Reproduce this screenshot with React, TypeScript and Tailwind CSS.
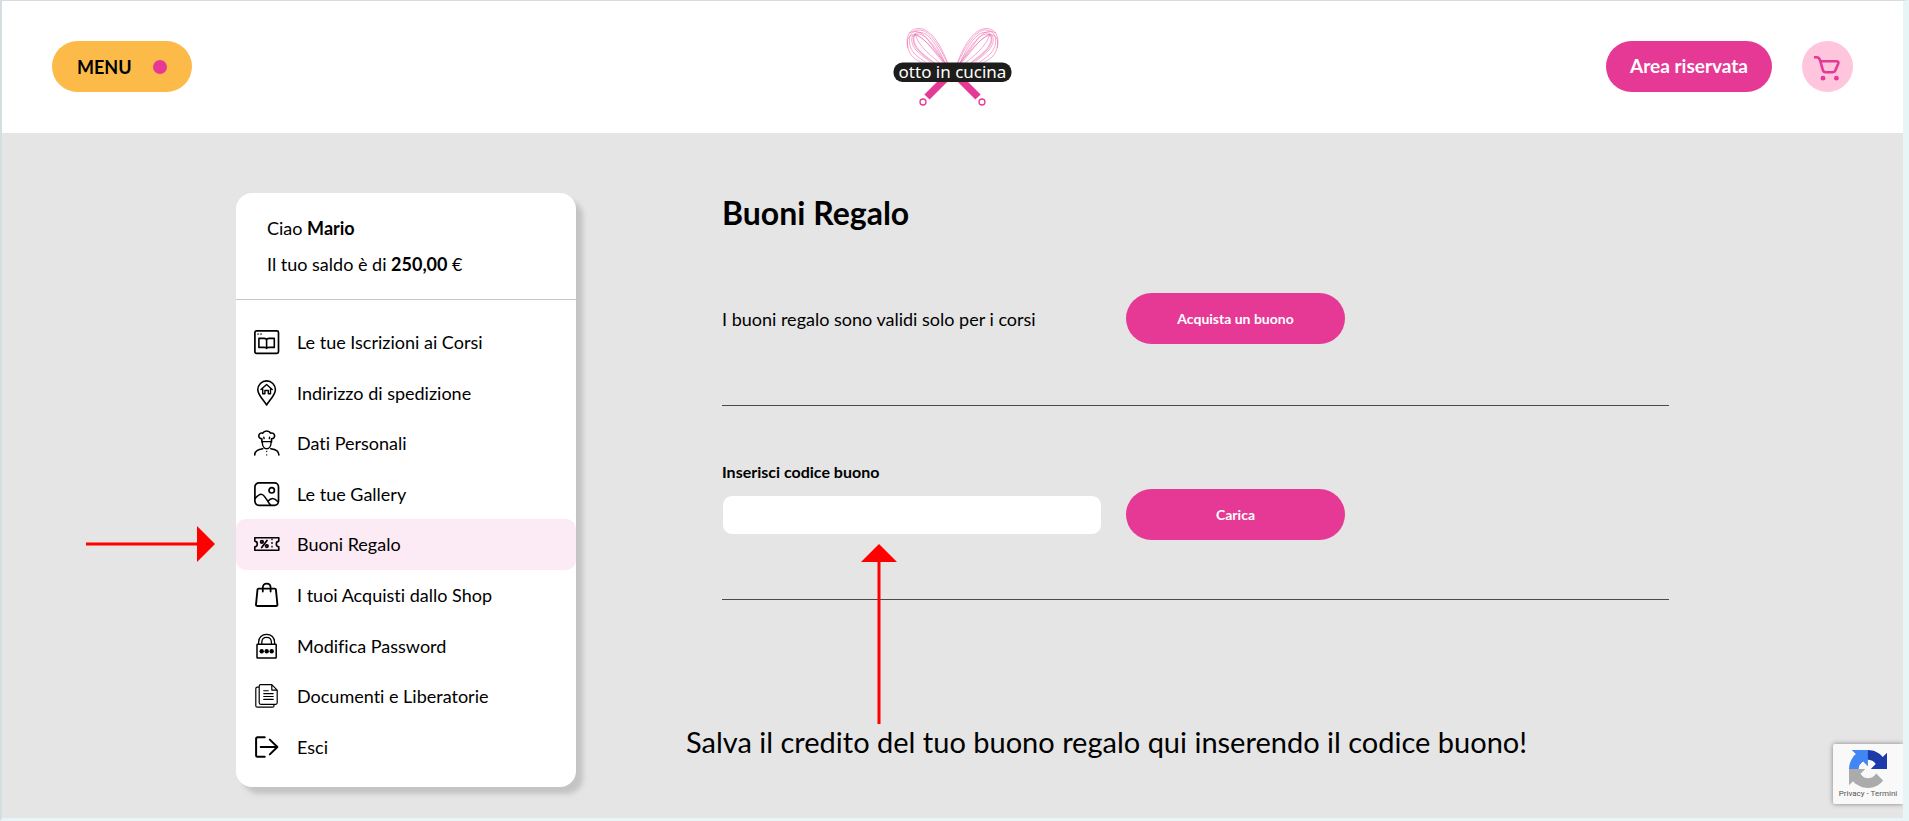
import { useState } from 'react';
import type { FormEvent, ReactNode } from 'react';

type MenuItem = {
  label: string;
  href: string;
  icon: ReactNode;
  active?: boolean;
};

function Icon({ children }: { children: ReactNode }) {
  return (
    <svg
      viewBox="0 0 26 26"
      className="h-[26px] w-[26px] shrink-0"
      fill="none"
      stroke="currentColor"
      strokeWidth="1.7"
      strokeLinecap="round"
      strokeLinejoin="round"
      aria-hidden="true"
    >
      {children}
    </svg>
  );
}

const menuItems: MenuItem[] = [
  {
    label: 'Le tue Iscrizioni ai Corsi',
    href: '#corsi',
    icon: (
      <Icon>
        <rect x="0.9" y="1.9" width="23.6" height="22.4" rx="1.6" />
        <path d="M3.6 5h1M6.6 5h1" strokeWidth="1.2" />
        <path d="M4.9 9.4h5.2c1.4 0 2.5.8 2.5 1.900 0-1.100 1.100-1.900 2.500-1.900h5.200v9h-5.200c-1.400 0-2.500.3-2.500 1.100 0-.8-1.100-1.100-2.500-1.100H4.900zM12.600 11.300v8" strokeWidth="1.6" />
      </Icon>
    ),
  },
  {
    label: 'Indirizzo di spedizione',
    href: '#indirizzo',
    icon: (
      <Icon>
        <path d="M12.6 25C9.8 20.4 3.8 14.8 3.8 9.7a8.8 8.8 0 0 1 17.6 0c0 5.1-6 10.7-8.8 15.3z" strokeWidth="1.6" />
        <path d="M7 9.6l5.6-5 5.6 5M8.7 8.800v5h2.200v-3.300h3.400v3.300h2.200v-5" strokeWidth="1.4" />
      </Icon>
    ),
  },
  {
    label: 'Dati Personali',
    href: '#dati',
    icon: (
      <Icon>
        <path d="M7.9 12V8.9C5.8 8.7 4.6 7.3 4.8 5.5c.2-1.9 2.1-3 4-2.300.7-1.500 2.200-2.200 3.900-2.200s3.200.7 3.900 2.200c1.900-.7 3.800.4 4 2.300.2 1.800-1 3.200-3.100 3.400V12" strokeWidth="1.6" />
        <path d="M7.9 11.6h9.600M8.300 12c0 4 1.800 6.800 4.400 6.800s4.400-2.800 4.400-6.800M9.800 7.200l.3 1.400M15.600 7.200l-.3 1.400" strokeWidth="1.4" />
        <path d="M.7 25c0-3.7 3.4-5.7 8.1-6.3M24.9 25c0-3.7-3.4-5.7-8.1-6.3" strokeWidth="1.6" />
        <path d="M12.7 21.5v.1M12.7 24.8v.1" strokeWidth="1.3" />
      </Icon>
    ),
  },
  {
    label: 'Le tue Gallery',
    href: '#gallery',
    icon: (
      <Icon>
        <rect x="0.9" y="1.9" width="23.6" height="22.4" rx="4" />
        <circle cx="17.7" cy="9.3" r="2.7" />
        <path d="M1 17.500c2-2.300 4.200-4.300 6.200-4.300 3.500 0 5.500 6.500 9.500 11M13.800 20.300c1.600-1.700 3.200-2.800 4.800-2.800 2 0 3.700 1.300 5.400 3.300" strokeWidth="1.6" />
      </Icon>
    ),
  },
  {
    label: 'Buoni Regalo',
    href: '#buoni',
    active: true,
    icon: (
      <Icon>
        <path d="M.8 6.8h24v3.300c-1.600.2-2.500 1.400-2.500 2.900s.9 2.700 2.500 2.900v3.300H.8v-3.300c1.600-.2 2.500-1.400 2.500-2.900s-.9-2.700-2.500-2.900z" strokeWidth="1.6" />
        <path d="M18 7.500v11" strokeDasharray="1.8 1.8" strokeLinecap="butt" strokeWidth="1.3" />
        <path d="M13 9.500l-5.300 7" />
        <circle cx="7.9" cy="10.900" r="1.300" />
        <circle cx="12.8" cy="15.100" r="1.300" />
      </Icon>
    ),
  },
  {
    label: 'I tuoi Acquisti dallo Shop',
    href: '#acquisti',
    icon: (
      <Icon>
        <path d="M4.6 6.6h16.2c.6 0 1 .3 1.100.9l1.500 15c.1.9-.5 1.500-1.300 1.500H3.300c-.8 0-1.400-.6-1.300-1.500l1.500-15c.1-.6.5-.9 1.100-.9z" strokeWidth="1.9" />
        <path d="M8.800 9.500V5.800c0-2.600 1.600-4.200 3.900-4.200s3.900 1.600 3.900 4.200v3.700" strokeWidth="1.8" />
      </Icon>
    ),
  },
  {
    label: 'Modifica Password',
    href: '#password',
    icon: (
      <Icon>
        <rect x="3" y="11.2" width="19.2" height="13.8" rx="0.6" strokeWidth="1.5" />
        <path d="M4.6 11V9.2C4.6 4.6 8 1.4 12.6 1.4s8 3.2 8 7.8V11M7.8 11V9.3c0-3 2-5 4.800-5s4.800 2 4.800 5V11" strokeWidth="1.3" />
        <g fill="currentColor" stroke="none">
          <circle cx="7.7" cy="18.2" r="2.2" />
          <circle cx="12.7" cy="18.2" r="2.2" />
          <circle cx="17.7" cy="18.2" r="2.2" />
        </g>
      </Icon>
    ),
  },
  {
    label: 'Documenti e Liberatorie',
    href: '#documenti',
    icon: (
      <Icon>
        <path d="M17.8 1.7H6.700c-.9 0-1.500.6-1.500 1.500v16.600c0 .9.6 1.500 1.500 1.500h15c.9 0 1.500-.6 1.500-1.500V7.100zM17.800 1.700v5.400h5.400M5 4.200H3.300c-.9 0-1.500.6-1.500 1.500v17c0 .9.6 1.500 1.500 1.500h15.200c.9 0 1.500-.6 1.500-1.500v-1.200" strokeWidth="1.2" />
        <path d="M9.7 7.800h4.600M9.700 10.600h9.500M9.700 13.500h9.500M9.700 16.400h9.500" strokeWidth="1.1" />
      </Icon>
    ),
  },
  {
    label: 'Esci',
    href: '#esci',
    icon: (
      <Icon>
        <path d="M10.7 3.3H3.6c-.9 0-1.500.6-1.500 1.500v16.400c0 .9.6 1.500 1.500 1.500h7.100M6.700 13h16.600M15.800 5.600l7.600 7.400-7.600 7.400" strokeWidth="2" />
      </Icon>
    ),
  },
];

function Whisk() {
  return (
    <g>
      <g fill="none" stroke="#ee6fb0" strokeWidth="0.6">
        <path d="M56 42C50 24 39 3.500 26 3.500 11 3.500 12 23 19 31c5 5 9 6 17 10" />
        <path d="M56 42C49 26 38 5.500 27 5 14 5 14 20 21 28c6 7 12 8 20 16" />
        <path d="M54 42C47 26 37 8 28 7.500 16 7 17 18 23 25c7 7 14 11 22 20" />
        <path d="M54 42C46 27 34 9 25 9c-7 0-6 10 0 16 7 8 15 11 23 20" />
        <path d="M54 42C43 30 33 13 22 9c-3 5 0 12 5 17 6 6 13 10 23 19" />
        <path d="M52 42C39 32 26 22 22 9M16 8c8-4 14 0 19 7l20 27" />
        <path d="M15 23c-2-9 1-14 7-13 9 2 21 17 33 32" />
      </g>
      <path d="M55 51L34 72" stroke="#e63995" strokeWidth="7.400" />
      <circle cx="30" cy="77" r="3" fill="none" stroke="#e63995" strokeWidth="1.300" />
    </g>
  );
}

function Logo() {
  return (
    <a href="#home" aria-label="otto in cucina" className="block">
      <svg viewBox="0 0 119 84" className="h-[84px] w-[119px]">
        <Whisk />
        <g transform="translate(119 0) scale(-1 1)">
          <Whisk />
        </g>
        <rect x="0.5" y="37.500" width="118" height="19.500" rx="9" fill="#1d1d1b" />
        <text x="59.500" y="52.500" textAnchor="middle" fill="#fff" fontSize="17" fontFamily="'Noto Sans', sans-serif">
          otto in cucina
        </text>
      </svg>
    </a>
  );
}

function Header() {
  return (
    <header className="grid h-[132px] grid-cols-[1fr_auto_1fr] items-center bg-white px-[50px] pb-px">
      <button type="button" className="flex h-[51px] items-center gap-[21px] justify-self-start rounded-full bg-[#fcbb49] px-[25px] text-lg font-bold">
        MENU
        <span className="h-3.5 w-3.5 rounded-full bg-[#e63995]" />
      </button>
      <Logo />
      <div className="flex items-center gap-[30px] justify-self-end">
        <a href="#area" className="flex h-[51px] items-center rounded-full bg-[#e63995] px-6 text-[19px] font-bold text-white">
          Area riservata
        </a>
        <a href="#carrello" aria-label="Carrello" className="flex h-[51px] w-[51px] items-center justify-center rounded-full bg-[#ffc5dd]">
          <svg viewBox="0 0 28 28" className="h-7 w-7" fill="none" stroke="#e63995" strokeWidth="2.6" strokeLinecap="round" strokeLinejoin="round">
            <path d="M.6 4.200h2c1.800 0 2.800.9 3.300 2.600l3 10.300c.4 1.400 1.200 2.100 2.600 2.100h7.500c1.100 0 1.900-.5 2.300-1.600l2.900-6.800c.6-1.500-.1-2.500-1.600-2.500H6.400" />
            <circle cx="9" cy="25.200" r="2.400" fill="#e63995" stroke="none" />
            <circle cx="22.400" cy="25.200" r="2.400" fill="#e63995" stroke="none" />
          </svg>
        </a>
      </div>
    </header>
  );
}

function Sidebar() {
  return (
    <aside className="flex min-h-[594px] w-[340px] shrink-0 flex-col rounded-2xl bg-white pb-[15px] text-lg shadow-[7px_7px_5px_#c4c4c4]">
      <div className="border-b border-[#c6c6c6] px-[31px] py-[17px] leading-9">
        <p>Ciao <strong>Mario</strong></p>
        <p>Il tuo saldo è di <strong>250,00</strong> €</p>
      </div>
      <nav className="mt-[17px] grid flex-1 auto-rows-fr">
        {menuItems.map((item) => (
          <a
            key={item.label}
            href={item.href}
            aria-current={item.active ? 'page' : undefined}
            className={`relative flex items-center gap-[17px] rounded-[10px] px-[18px] ${item.active ? 'bg-[#fceaf4]' : ''}`}
          >
            {item.icon}
            {item.label}
            {item.active && (
              <svg viewBox="0 0 129 36" className="absolute right-full mr-[21px] h-9 w-[129px]" fill="red" aria-hidden="true">
                <path d="M0 16.500h111V0l18 18-18 18V19.500H0z" />
              </svg>
            )}
          </a>
        ))}
      </nav>
    </aside>
  );
}

function GiftCards() {
  const [code, setCode] = useState('');

  const handleSubmit = (e: FormEvent) => {
    e.preventDefault();
    setCode('');
  };

  return (
    <section className="min-w-0 flex-1">
      <h1 className="text-[32px] leading-10 font-bold">Buoni Regalo</h1>

      <div className="mt-[60px] grid grid-cols-[380px_219px] items-center gap-6 border-b border-[#4a4a4a] pb-[61px]">
        <p className="text-lg">I buoni regalo sono validi solo per i corsi</p>
        <button type="button" className="h-[51px] rounded-full bg-[#e63995] text-sm font-bold text-white">
          Acquista un buono
        </button>
      </div>

      <form onSubmit={handleSubmit} className="border-b border-[#4a4a4a] pt-[54px] pb-[59px]">
        <label htmlFor="codice" className="block text-base font-bold">Inserisci codice buono</label>
        <div className="mt-[5px] grid grid-cols-[380px_219px] items-center gap-6">
          <div className="relative">
            <input
              id="codice"
              type="text"
              value={code}
              onChange={(e) => setCode(e.target.value)}
              className="block h-10 w-full rounded-[10px] border border-[#e5e5e5] bg-white px-3 text-base outline-none"
            />
            <svg viewBox="0 0 36 180" className="absolute top-full left-[139px] mt-[9px] h-[180px] w-9" fill="red" aria-hidden="true">
              <path d="M18 0l18 18H19.500v162h-3V18H0z" />
            </svg>
          </div>
          <button type="submit" className="h-[51px] rounded-full bg-[#e63995] text-sm font-bold text-white">
            Carica
          </button>
        </div>
      </form>

      <p className="mt-[122px] -ml-9 text-[29px] leading-10 whitespace-nowrap">
        Salva il credito del tuo buono regalo qui inserendo il codice buono!
      </p>
    </section>
  );
}

function RecaptchaBadge() {
  return (
    <div className="absolute right-0 bottom-3.5 flex h-[60px] w-[70px] flex-col items-center rounded-l-xs bg-[#f9f9f9] pt-1.5 shadow-[0_0_5px_gray] [clip-path:inset(-8px_0_-8px_-8px)]">
      <svg viewBox="0 0 64 64" className="h-[38px] w-[38px]" aria-hidden="true">
        <path d="M64 31.955l-.033-1.37V4.687l-7.16 7.16C50.948 4.674 42.033.093 32.05.093c-10.4 0-19.622 4.96-25.458 12.64l11.736 11.86a15.55 15.55 0 0 1 4.754-5.334c2.05-1.6 4.952-2.906 8.968-2.906.485 0 .86.057 1.135.163 4.976.393 9.288 3.14 11.828 7.124l-8.307 8.307L64 31.953" fill="#1c3aa9" />
        <path d="M31.862.094l-1.37.033H4.594l7.16 7.16C4.58 13.147 0 22.06 0 32.046c0 10.4 4.96 19.622 12.64 25.458L24.5 45.768a15.55 15.55 0 0 1-5.334-4.754c-1.6-2.05-2.906-4.952-2.906-8.968 0-.485.057-.86.163-1.135.393-4.976 3.14-9.288 7.124-11.828l8.307 8.307L31.86.095" fill="#4285f4" />
        <path d="M.001 32.045l.033 1.37v25.898l7.16-7.16c5.86 7.173 14.774 11.754 24.76 11.754 10.4 0 19.622-4.96 25.458-12.64l-11.736-11.86a15.55 15.55 0 0 1-4.754 5.334c-2.05 1.6-4.952 2.906-8.968 2.906-.485 0-.86-.057-1.135-.163-4.976-.393-9.288-3.14-11.828-7.124l8.307-8.307c-10.522.04-22.4.066-27.295-.005" fill="#ababab" />
      </svg>
      <p className="font-[Roboto] text-[8px] leading-3 whitespace-nowrap text-[#555]">
        <a href="#privacy">Privacy</a> - <a href="#termini">Termini</a>
      </p>
    </div>
  );
}

export default function App() {
  return (
    <div className="flex min-h-screen flex-col border-t border-r-[6px] border-b-[3px] border-l-2 border-[#e8f5f6] border-t-[#d5dde0] border-l-[#d5dde0] bg-[#e5e5e5] font-[Lato,sans-serif] text-black [font-variant-ligatures:no-common-ligatures]">
      <Header />
      <main className="relative flex-1 px-6 pt-[60px] pb-6">
        <div className="mx-auto flex max-w-[1433px] gap-[146px]">
          <Sidebar />
          <GiftCards />
        </div>
        <RecaptchaBadge />
      </main>
    </div>
  );
}
